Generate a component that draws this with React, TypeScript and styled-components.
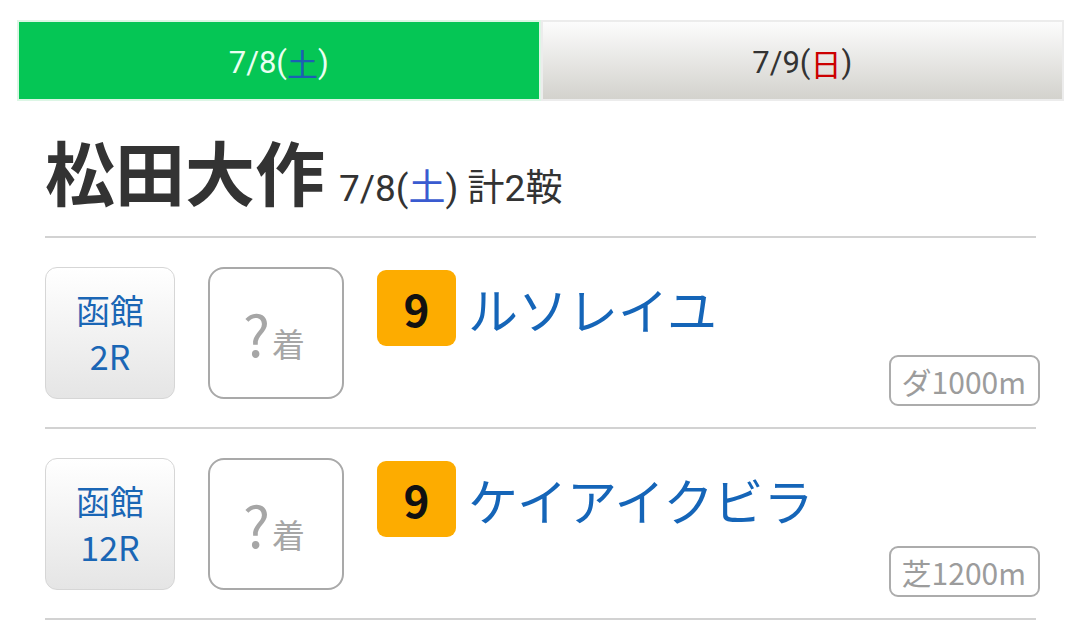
import React from "react";
import styled, { createGlobalStyle } from "styled-components";

const Global = createGlobalStyle`
  html, body { margin: 0; padding: 0; background: #fff; }
  body { font-family: Roboto, "Noto Sans CJK JP", sans-serif; color: #333; }
`;

const Page = styled.div`
  padding: 20px 16px 0 17px;
`;

const Tabs = styled.div`
  display: grid;
  grid-template-columns: 1fr 1fr;
`;

const Tab = styled.div<{ $active?: boolean }>`
  height: 73px;
  border: 2px solid ${(p) => (p.$active ? "#dcf6e5" : "#ececec")};
  background: ${(p) =>
    p.$active ? "#05c655" : "linear-gradient(#fcfcfc, #d3d2cd)"};
  color: ${(p) => (p.$active ? "#eafff1" : "#333")};
  display: flex;
  align-items: center;
  justify-content: center;
  font-family: Roboto, "Noto Sans CJK JP", sans-serif;
  font-size: 31px;
  padding-top: 4px;
  box-sizing: content-box;
`;

const Day = styled.span<{ $c: string }>`
  color: ${(p) => p.$c};
`;

const Content = styled.div`
  margin: 0 28px;
`;

const Header = styled.div`
  display: flex;
  align-items: baseline;
  gap: 14px;
  padding: 35px 0 24px;
  border-bottom: 2px solid #d2d2d2;
`;

const Name = styled.h1`
  margin: 0;
  font-family: "Noto Sans CJK JP", sans-serif;
  font-weight: 700;
  font-size: 70px;
  line-height: 1;
  color: #333;
`;

const Sub = styled.span`
  font-family: Roboto, "Noto Sans CJK JP", sans-serif;
  font-size: 37px;
  color: #333;
`;

const Row = styled.div`
  display: flex;
  align-items: flex-start;
  padding: 29px 0 21px;
  border-bottom: 2px solid #d2d2d2;
`;

const Venue = styled.div`
  width: 128px;
  height: 130px;
  border: 1px solid #d6d6d6;
  border-radius: 12px;
  background: linear-gradient(#ffffff, #e5e5e5);
  display: flex;
  flex-direction: column;
  align-items: center;
  justify-content: center;
  font-family: "Noto Sans CJK JP", sans-serif;
  font-size: 34px;
  line-height: 46px;
  color: #1a66b5;
`;

const Result = styled.div`
  width: 132px;
  height: 128px;
  margin-left: 33px;
  border: 2px solid #a9a9a9;
  border-radius: 16px;
  display: flex;
  align-items: center;
  justify-content: center;
  font-family: "Noto Sans CJK JP", sans-serif;
  color: #a6a6a6;
`;

const ResultText = styled.span`
  display: flex;
  align-items: baseline;
  line-height: 1;
  margin-top: -2px;
  margin-left: -4px;
`;

const Q = styled.span`
  font-size: 57px;
  margin-right: 2px;
`;

const Chaku = styled.span`
  font-size: 33px;
`;

const Info = styled.div`
  flex: 1;
  margin-left: 33px;
  margin-top: 3px;
  display: flex;
  flex-direction: column;
`;

const HorseLine = styled.div`
  display: flex;
  align-items: center;
  gap: 12px;
`;

const Badge = styled.div`
  width: 79px;
  height: 76px;
  border-radius: 9px;
  background: #fdac00;
  color: #111;
  display: flex;
  align-items: center;
  justify-content: center;
  font-family: "Noto Sans CJK JP", sans-serif;
  font-weight: 700;
  font-size: 44px;
`;

const Horse = styled.span`
  font-family: "Noto Sans CJK JP", sans-serif;
  font-size: 50px;
  color: #1565b8;
  line-height: 1;
`;

const Tag = styled.div`
  align-self: flex-end;
  margin-top: 9px;
  margin-right: -4px;
  height: 47px;
  padding: 0 12px 0 11px;
  border: 2px solid #acacac;
  border-radius: 9px;
  display: flex;
  align-items: center;
  font-family: "Noto Sans CJK JP", sans-serif;
  font-size: 30px;
  color: #9c9c9c;
`;

const races = [
  { venue: "函館", race: "2R", num: 9, horse: "ルソレイユ", dist: "ダ1000m" },
  { venue: "函館", race: "12R", num: 9, horse: "ケイアイクビラ", dist: "芝1200m" },
];

export default function App() {
  return (
    <Page>
      <Global />
      <Tabs>
        <Tab $active>
          7/8(<Day $c="#1c5fb4">土</Day>)
        </Tab>
        <Tab>
          7/9(<Day $c="#cc0000">日</Day>)
        </Tab>
      </Tabs>
      <Content>
        <Header>
          <Name>松田大作</Name>
          <Sub>
            7/8(<Day $c="#3a5bd0">土</Day>) 計2鞍
          </Sub>
        </Header>
        {races.map((r, i) => (
          <Row key={i}>
            <Venue>
              <span>{r.venue}</span>
              <span>{r.race}</span>
            </Venue>
            <Result>
              <ResultText>
                <Q>?</Q>
                <Chaku>着</Chaku>
              </ResultText>
            </Result>
            <Info>
              <HorseLine>
                <Badge>{r.num}</Badge>
                <Horse>{r.horse}</Horse>
              </HorseLine>
              <Tag>{r.dist}</Tag>
            </Info>
          </Row>
        ))}
      </Content>
    </Page>
  );
}
